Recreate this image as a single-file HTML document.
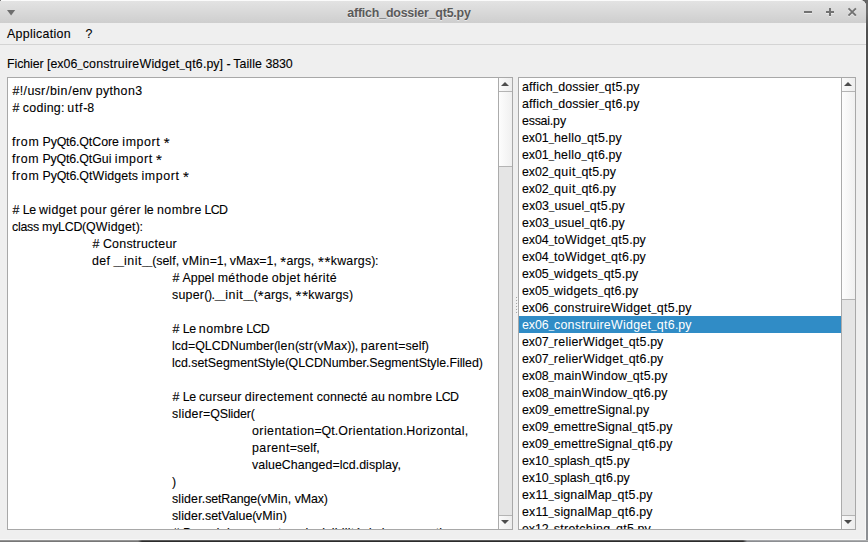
<!DOCTYPE html><html><head><meta charset="utf-8"><title>affich_dossier_qt5.py</title><style>
html,body{margin:0;padding:0;}
body{width:868px;height:542px;overflow:hidden;background:#606060;position:relative;font-family:"Liberation Sans",sans-serif;font-size:12.4px;color:#000;-webkit-text-stroke:0.1px #000;}
#bgR{position:absolute;left:866px;top:0;width:2px;height:542px;background:linear-gradient(#666 0,#6c6c6c 12px,#505050 30px,#4a4a4a 130px,#565656 200px,#6a6a6a 272px,#7c7f82 330px,#8d9094 542px);}
#bgB:after{content:'';position:absolute;left:0;top:0;width:868px;height:1px;background:rgba(255,255,255,.22);}
#bgB{position:absolute;left:0;top:540px;width:868px;height:2px;background:linear-gradient(90deg,#777 0,#777 138px,#2c2c2c 142px,#2c2c2c 743px,#8a8c90 747px,#959799 868px);}
#win{position:absolute;left:0;top:0;width:866px;height:540px;background:#efefef;border-radius:0 6px 0 0;overflow:hidden;box-shadow:inset -1px -1px 0 #f7f7f7;}
#title{position:absolute;left:0;top:0;width:866px;height:23px;background:linear-gradient(#fbfbfb 0,#fbfbfb 1px,#e3e3e3 1px,#cecece 23px);}
#title .t{position:absolute;left:0;width:818px;top:5px;text-align:center;font-weight:bold;color:#5a5a5a;line-height:16px;white-space:pre;letter-spacing:-0.19px;text-shadow:0 1px 0 rgba(255,255,255,.55);-webkit-text-stroke:0;}
#menu{position:absolute;left:0;top:23px;width:866px;height:21px;border-bottom:1px solid #d4d4d4;}
#menu>span{position:absolute;top:3px;line-height:17px;white-space:pre;}
#lbl{position:absolute;left:7px;top:56px;line-height:17px;white-space:pre;}
.frame{position:absolute;top:77px;height:453px;box-sizing:border-box;border:1px solid #a8a8a8;background:#fff;overflow:hidden;}
#edit{left:7px;width:506px;}
#list{left:518px;width:338px;}
.ln{position:absolute;height:17px;line-height:17px;white-space:pre;}
.sb{position:absolute;top:0;right:0;width:13px;height:451px;background:#e5e5e5;border-left:1px solid #ababab;box-sizing:content-box;}
.sb .btn{position:absolute;left:0;width:13px;height:13px;background:linear-gradient(90deg,#fafafa,#ededed);}
.sb .up{top:0;border-bottom:1px solid #b4b4b4;}
.sb .dn{bottom:0;border-top:1px solid #b4b4b4;}
.sb .thumb{position:absolute;left:0;top:14px;width:13px;background:linear-gradient(90deg,#fdfdfd,#f0f0f0);border-bottom:1px solid #b4b4b4;box-sizing:content-box;}
.tri{position:absolute;left:2px;width:0;height:0;border-left:4.5px solid transparent;border-right:4.5px solid transparent;}
.up .tri{top:4px;border-bottom:4.5px solid #4c4c4c;}
.dn .tri{top:4px;border-top:4.5px solid #4c4c4c;}
#grip i{position:absolute;left:516px;width:1px;height:1px;background:#a4a4a4;box-shadow:1px 1px 0 #fafafa;}
.u{font-size:9.6px}
.ast{font-size:15px;position:relative;top:2px;line-height:0;}
.sel{position:absolute;left:0;width:322px;height:17px;background:#308cc6;}
</style></head><body>
<div id="bgR"></div><div id="bgB"></div><div id="win">
<div style="position:absolute;left:0;top:0;width:1px;height:1px;background:#777;z-index:5"></div>
<div id="title"><svg style="position:absolute;left:7px;top:10px" width="9" height="6" viewBox="0 0 9 6"><path d="M0 0H8.2L4.1 5.6Z" fill="#6e6e6e"/></svg><div class="t">affich_dossier_qt5.py</div>
<svg style="position:absolute;left:800px;top:5px" width="60" height="16" viewBox="0 0 60 16" fill="none" stroke-width="2"><g stroke="#fff" stroke-opacity=".5" transform="translate(0,1)"><path d="M4 7H12M26 7H34M30 3V11"/><path d="M48.5 3.3L55.9 10.7M55.9 3.3L48.5 10.7" stroke-width="1.9"/></g><g stroke="#727272"><path d="M4 7H12M26 7H34M30 3V11"/><path d="M48.5 3.3L55.9 10.7M55.9 3.3L48.5 10.7" stroke-width="1.9"/></g></svg></div>
<div id="menu"><span style="left:7px"><span style="letter-spacing:0.30px">Application</span></span><span style="left:85.6px">?</span></div>
<div id="lbl"><span style="letter-spacing:-0.08px">Fichier </span>[ex06<span class="u">_</span><span style="letter-spacing:0.24px">construireWidget<span class="u">_</span>qt6</span>.py] <span style="letter-spacing:-0.35px">- </span><span style="letter-spacing:0.07px">Taille </span><span style="letter-spacing:-0.11px">3830</span></div>
<div class="frame" id="edit">
<div class="ln" style="left:4px;top:4.6px"><span style="padding:0 0.42px">#</span><span style="letter-spacing:-0.23px">!</span><span style="padding:0 0.50px">/</span><span style="letter-spacing:0.29px">usr</span><span style="padding:0 0.50px">/</span><span style="letter-spacing:0.44px">bin</span><span style="padding:0 0.50px">/</span>env <span style="letter-spacing:0.38px">python3</span></div>
<div class="ln" style="left:4px;top:21.6px"><span style="padding:0 0.41px">#</span><span style="letter-spacing:-0.34px"> </span><span style="letter-spacing:0.28px">coding</span><span style="letter-spacing:-0.29px">: </span><span style="letter-spacing:0.69px">utf</span><span style="letter-spacing:-0.17px">-8</span></div>
<div class="ln" style="left:4px;top:55.6px"><span style="letter-spacing:0.64px">from</span><span style="letter-spacing:-0.20px"> PyQt6.</span><span style="letter-spacing:-0.05px">QtCore </span><span style="letter-spacing:0.58px">import</span><span style="letter-spacing:-0.36px"> </span><span class="ast" style="padding:0 0.36px">*</span></div>
<div class="ln" style="left:4px;top:72.6px"><span style="letter-spacing:0.62px">from</span><span style="letter-spacing:-0.21px"> PyQt6.</span><span style="letter-spacing:-0.02px">QtGui </span><span style="letter-spacing:0.57px">import</span><span style="letter-spacing:-0.37px"> </span><span class="ast" style="padding:0 0.35px">*</span></div>
<div class="ln" style="left:4px;top:89.6px"><span style="letter-spacing:0.64px">from</span><span style="letter-spacing:-0.19px"> PyQt6.</span><span style="letter-spacing:0.09px">QtWidgets </span><span style="letter-spacing:0.59px">import</span><span style="letter-spacing:-0.36px"> </span><span class="ast" style="padding:0 0.36px">*</span></div>
<div class="ln" style="left:4px;top:123.6px"><span style="padding:0 0.41px">#</span><span style="letter-spacing:-0.37px"> Le </span><span style="letter-spacing:0.40px">widget</span><span style="letter-spacing:-0.35px"> </span><span style="letter-spacing:0.52px">pour</span><span style="letter-spacing:-0.35px"> </span><span style="letter-spacing:0.35px">gérer</span><span style="letter-spacing:-0.13px"> le </span><span style="letter-spacing:0.47px">nombre</span><span style="letter-spacing:-0.65px"> LCD</span></div>
<div class="ln" style="left:4px;top:140.6px"><span style="letter-spacing:-0.26px">class myLCD(</span><span style="letter-spacing:0.21px">QWidget</span><span style="letter-spacing:-0.38px">):</span></div>
<div class="ln" style="left:84px;top:157.6px"><span style="padding:0 0.43px">#</span><span style="letter-spacing:-0.33px"> </span><span style="letter-spacing:0.26px">Constructeur</span></div>
<div class="ln" style="left:84px;top:174.6px"><span style="letter-spacing:0.35px">def</span><span style="letter-spacing:-0.12px"> <span class="u">__</span></span><span style="letter-spacing:0.52px">init</span><span style="letter-spacing:-0.19px"><span class="u">__</span>(</span><span style="letter-spacing:0.04px">self,</span><span style="letter-spacing:-0.33px"> </span><span style="letter-spacing:0.33px">vMin</span><span style="letter-spacing:-0.25px">=1, </span>vMax=1<span style="letter-spacing:-0.29px">, </span><span class="ast" style="padding:0 0.38px">*</span><span style="letter-spacing:0.09px">args,</span><span style="letter-spacing:-0.33px"> </span><span class="ast" style="padding:0 0.38px">*</span><span class="ast" style="padding:0 0.38px">*</span><span style="letter-spacing:0.23px">kwargs</span><span style="letter-spacing:-0.39px">):</span></div>
<div class="ln" style="left:164px;top:191.6px"><span style="padding:0 0.42px">#</span> Appel <span style="letter-spacing:0.41px">méthode</span><span style="letter-spacing:-0.34px"> </span><span style="letter-spacing:0.39px">objet</span><span style="letter-spacing:-0.34px"> </span><span style="letter-spacing:0.39px">hérité</span></div>
<div class="ln" style="left:164px;top:208.6px"><span style="letter-spacing:0.25px">super</span><span style="letter-spacing:-0.44px">().</span><span class="u">__</span><span style="letter-spacing:0.52px">init</span><span style="letter-spacing:-0.19px"><span class="u">__</span>(</span><span class="ast" style="padding:0 0.38px">*</span><span style="letter-spacing:0.09px">args,</span><span style="letter-spacing:-0.33px"> </span><span class="ast" style="padding:0 0.38px">*</span><span class="ast" style="padding:0 0.38px">*</span><span style="letter-spacing:0.23px">kwargs</span><span style="letter-spacing:-0.54px">)</span></div>
<div class="ln" style="left:164px;top:242.6px"><span style="padding:0 0.40px">#</span><span style="letter-spacing:-0.38px"> Le </span><span style="letter-spacing:0.45px">nombre</span><span style="letter-spacing:-0.66px"> LCD</span></div>
<div class="ln" style="left:164px;top:259.6px"><span style="letter-spacing:0.03px">lcd=QLCDNumber</span><span style="letter-spacing:-0.54px">(</span><span style="letter-spacing:0.25px">len</span><span style="letter-spacing:-0.54px">(</span><span style="letter-spacing:0.43px">str</span><span style="letter-spacing:-0.54px">(</span><span style="letter-spacing:0.12px">vMax</span><span style="letter-spacing:-0.41px">)), </span><span style="letter-spacing:0.41px">parent</span>=self<span style="letter-spacing:-0.54px">)</span></div>
<div class="ln" style="left:164px;top:276.6px">lcd.setSegmentStyle<span style="letter-spacing:-0.56px">(</span><span style="letter-spacing:-0.04px">QLCDNumber.SegmentStyle.Filled</span><span style="letter-spacing:-0.56px">)</span></div>
<div class="ln" style="left:164px;top:310.6px"><span style="padding:0 0.41px">#</span><span style="letter-spacing:-0.37px"> Le </span><span style="letter-spacing:0.21px">curseur</span><span style="letter-spacing:-0.35px"> </span><span style="letter-spacing:0.34px">directement</span><span style="letter-spacing:0.05px"> connecté au</span><span style="letter-spacing:-0.35px"> </span><span style="letter-spacing:0.46px">nombre</span><span style="letter-spacing:-0.65px"> LCD</span></div>
<div class="ln" style="left:164px;top:327.6px"><span style="letter-spacing:0.25px">slider</span><span style="letter-spacing:-0.10px">=QSlider(</span></div>
<div class="ln" style="left:244px;top:344.6px"><span style="letter-spacing:0.43px">orientation</span><span style="letter-spacing:-0.39px">=</span><span style="letter-spacing:0.12px">Qt.</span><span style="letter-spacing:0.37px">Orientation</span><span style="letter-spacing:-0.24px">.</span><span style="letter-spacing:0.28px">Horizontal</span><span style="letter-spacing:-0.24px">,</span></div>
<div class="ln" style="left:244px;top:361.6px"><span style="letter-spacing:0.45px">parent</span>=self,</div>
<div class="ln" style="left:244px;top:378.6px"><span style="letter-spacing:0.04px">valueChanged=lcd.</span><span style="letter-spacing:0.09px">display,</span></div>
<div class="ln" style="left:164px;top:395.6px"><span style="letter-spacing:-0.56px">)</span></div>
<div class="ln" style="left:164px;top:412.6px"><span style="letter-spacing:0.13px">slider.</span><span style="letter-spacing:-0.17px">setRange(</span><span style="letter-spacing:0.16px">vMin,</span><span style="letter-spacing:-0.13px"> vMax)</span></div>
<div class="ln" style="left:164px;top:429.6px"><span style="letter-spacing:0.09px">slider.</span>setValue<span style="letter-spacing:-0.60px">(</span><span style="letter-spacing:0.21px">vMin</span><span style="letter-spacing:-0.60px">)</span></div>
<div class="ln" style="left:164px;top:446.6px"><span style="padding:0 0.40px">#</span><span style="letter-spacing:-0.03px"> Pour </span><span style="letter-spacing:0.34px">debugger</span><span style="letter-spacing:-0.35px"> </span><span style="letter-spacing:0.34px">et</span><span style="letter-spacing:-0.35px"> </span><span style="letter-spacing:0.22px">avoir</span><span style="letter-spacing:-0.35px"> </span><span style="letter-spacing:0.21px">visibilité</span><span style="letter-spacing:-0.10px"> de la </span><span style="letter-spacing:0.21px">conception</span></div>
<div class="sb"><div class="btn up"><div class="tri"></div></div><div class="thumb" style="height:74px"></div><div class="btn dn"><div class="tri"></div></div></div>
</div>
<div id="grip"><i style="top:297px"></i><i style="top:300px"></i><i style="top:303px"></i><i style="top:306px"></i><i style="top:309px"></i><i style="top:312px"></i></div>
<div class="frame" id="list">
<div class="ln" style="left:3px;top:0.7px"><span style="letter-spacing:0.23px">affich<span class="u">_</span></span><span style="letter-spacing:0.09px">dossier<span class="u">_</span></span><span style="letter-spacing:0.41px">qt5</span>.py</div>
<div class="ln" style="left:3px;top:17.7px"><span style="letter-spacing:0.23px">affich<span class="u">_</span></span><span style="letter-spacing:0.09px">dossier<span class="u">_</span></span><span style="letter-spacing:0.41px">qt6</span>.py</div>
<div class="ln" style="left:3px;top:34.7px"><span style="letter-spacing:-0.22px">essai.</span><span style="letter-spacing:0.16px">py</span></div>
<div class="ln" style="left:3px;top:51.7px"><span style="letter-spacing:-0.06px">ex01<span class="u">_</span></span><span style="letter-spacing:0.27px">hello<span class="u">_</span>qt5</span>.py</div>
<div class="ln" style="left:3px;top:68.7px"><span style="letter-spacing:-0.06px">ex01<span class="u">_</span></span><span style="letter-spacing:0.27px">hello<span class="u">_</span>qt6</span>.py</div>
<div class="ln" style="left:3px;top:85.7px"><span style="letter-spacing:-0.06px">ex02<span class="u">_</span></span><span style="letter-spacing:0.51px">quit</span><span style="letter-spacing:0.17px"><span class="u">_</span>qt5.</span><span style="letter-spacing:0.15px">py</span></div>
<div class="ln" style="left:3px;top:102.7px"><span style="letter-spacing:-0.06px">ex02<span class="u">_</span></span><span style="letter-spacing:0.51px">quit</span><span style="letter-spacing:0.17px"><span class="u">_</span>qt6.</span><span style="letter-spacing:0.15px">py</span></div>
<div class="ln" style="left:3px;top:119.7px"><span style="letter-spacing:0.04px">ex03<span class="u">_</span>usuel<span class="u">_</span></span><span style="letter-spacing:0.42px">qt5</span>.py</div>
<div class="ln" style="left:3px;top:136.7px"><span style="letter-spacing:0.04px">ex03<span class="u">_</span>usuel<span class="u">_</span></span><span style="letter-spacing:0.42px">qt6</span>.py</div>
<div class="ln" style="left:3px;top:153.7px"><span style="letter-spacing:-0.04px">ex04<span class="u">_</span></span><span style="letter-spacing:0.31px">toWidget<span class="u">_</span>qt5</span>.py</div>
<div class="ln" style="left:3px;top:170.7px"><span style="letter-spacing:-0.04px">ex04<span class="u">_</span></span><span style="letter-spacing:0.31px">toWidget<span class="u">_</span>qt6</span>.py</div>
<div class="ln" style="left:3px;top:187.7px"><span style="letter-spacing:-0.04px">ex05<span class="u">_</span></span><span style="letter-spacing:0.28px">widgets<span class="u">_</span>qt5</span>.py</div>
<div class="ln" style="left:3px;top:204.7px"><span style="letter-spacing:-0.04px">ex05<span class="u">_</span></span><span style="letter-spacing:0.28px">widgets<span class="u">_</span>qt6</span>.py</div>
<div class="ln" style="left:3px;top:221.7px"><span style="letter-spacing:-0.06px">ex06<span class="u">_</span></span><span style="letter-spacing:0.27px">construireWidget<span class="u">_</span>qt5</span>.py</div>
<div class="sel" style="top:238px"></div>
<div class="ln" style="left:3px;top:238.7px;color:#fff;-webkit-text-stroke:0"><span style="letter-spacing:-0.06px">ex06<span class="u">_</span></span><span style="letter-spacing:0.27px">construireWidget<span class="u">_</span>qt6</span>.py</div>
<div class="ln" style="left:3px;top:255.7px"><span style="letter-spacing:-0.07px">ex07<span class="u">_</span></span><span style="letter-spacing:0.26px">relierWidget<span class="u">_</span>qt5</span>.py</div>
<div class="ln" style="left:3px;top:272.7px"><span style="letter-spacing:-0.07px">ex07<span class="u">_</span></span><span style="letter-spacing:0.26px">relierWidget<span class="u">_</span>qt6</span>.py</div>
<div class="ln" style="left:3px;top:289.7px"><span style="letter-spacing:-0.08px">ex08<span class="u">_</span></span><span style="letter-spacing:0.25px">mainWindow<span class="u">_</span>qt5</span>.py</div>
<div class="ln" style="left:3px;top:306.7px"><span style="letter-spacing:-0.08px">ex08<span class="u">_</span></span><span style="letter-spacing:0.25px">mainWindow<span class="u">_</span>qt6</span>.py</div>
<div class="ln" style="left:3px;top:323.7px"><span style="letter-spacing:-0.06px">ex09<span class="u">_</span></span><span style="letter-spacing:0.15px">emettreSignal.py</span></div>
<div class="ln" style="left:3px;top:340.7px"><span style="letter-spacing:-0.09px">ex09<span class="u">_</span></span><span style="letter-spacing:0.14px">emettreSignal<span class="u">_</span></span><span style="letter-spacing:0.37px">qt5</span>.py</div>
<div class="ln" style="left:3px;top:357.7px"><span style="letter-spacing:-0.09px">ex09<span class="u">_</span></span><span style="letter-spacing:0.14px">emettreSignal<span class="u">_</span></span><span style="letter-spacing:0.37px">qt6</span>.py</div>
<div class="ln" style="left:3px;top:374.7px"><span style="letter-spacing:-0.04px">ex10<span class="u">_</span>splash<span class="u">_</span></span><span style="letter-spacing:0.38px">qt5</span>.py</div>
<div class="ln" style="left:3px;top:391.7px"><span style="letter-spacing:-0.04px">ex10<span class="u">_</span>splash<span class="u">_</span></span><span style="letter-spacing:0.38px">qt6</span>.py</div>
<div class="ln" style="left:3px;top:408.7px"><span style="letter-spacing:0.15px">ex11<span class="u">_</span>signalMap<span class="u">_</span></span><span style="letter-spacing:0.41px">qt5</span>.py</div>
<div class="ln" style="left:3px;top:425.7px"><span style="letter-spacing:0.15px">ex11<span class="u">_</span>signalMap<span class="u">_</span></span><span style="letter-spacing:0.41px">qt6</span>.py</div>
<div class="ln" style="left:3px;top:442.7px"><span style="letter-spacing:-0.08px">ex12<span class="u">_</span></span><span style="letter-spacing:0.28px">stretching<span class="u">_</span>qt5</span>.py</div>
<div class="sb"><div class="btn up"><div class="tri"></div></div><div class="thumb" style="height:207px"></div><div class="btn dn"><div class="tri"></div></div></div>
</div>
</div></body></html>
